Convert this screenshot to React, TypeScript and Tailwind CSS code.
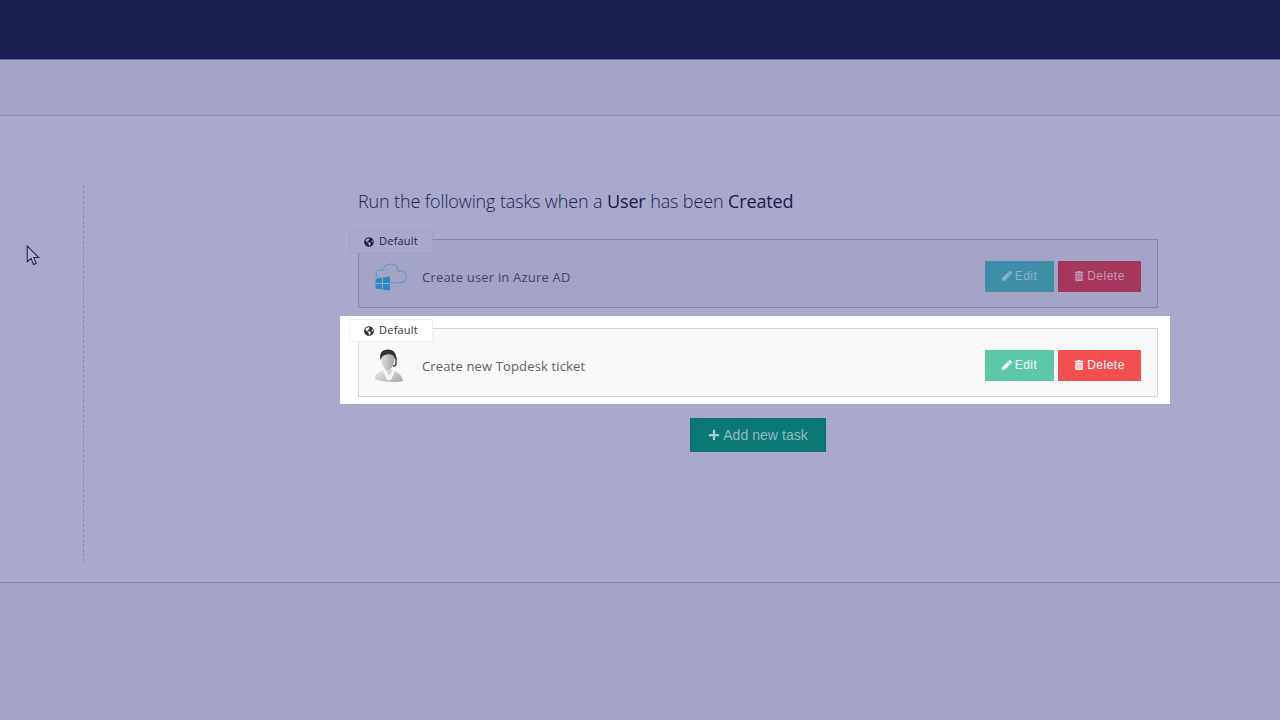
import { FaGlobeAmericas, FaPen, FaTrashAlt, FaPlus } from "react-icons/fa";

function AzureIcon() {
  return (
    <svg width="34" height="28" viewBox="0 0 34 28" fill="none">
      <path d="M6 15.5C2.5 14 1.5 11.5 2.5 9.5C3.5 7.5 6 6.5 8.5 7.5C9.5 3.5 13 1 16.5 1C21 1 24 4 24.5 8.5C27 7.2 30 8 31.5 10.5C33 13 32.5 16 30.5 18C29.5 19 28 19.7 26 19.7H15" stroke="#5a9bcb" strokeWidth="1.1" />
      <path d="M1.5 17.2L8 16.2V21.6H1.5Z M9 16L16 15V21.6H9Z M1.5 22.6H8V28L1.5 27Z M9 22.6H16V29L9 28.2Z" fill="#2a8cc4" transform="translate(0 -1.5)" />
    </svg>
  );
}

function AgentIcon() {
  return (
    <svg width="30" height="34" viewBox="0 0 30 34">
      <defs>
        <linearGradient id="bodyGrad" x1="0" y1="0" x2="1" y2="1">
          <stop offset="0" stopColor="#ececec" />
          <stop offset="1" stopColor="#a9a9a9" />
        </linearGradient>
        <linearGradient id="faceGrad" x1="0" y1="0" x2="1" y2="0">
          <stop offset="0" stopColor="#e0e0e0" />
          <stop offset="1" stopColor="#a0a0a0" />
        </linearGradient>
      </defs>
      <path d="M1 30C1 26 3 23.5 8 22L11 20.5H18L21 22C25 23.5 28 27 29 32C24 33.5 8 33.5 1 30Z" fill="url(#bodyGrad)" />
      <path d="M11 20L15 27L19 20.5L21 22L17 31H13L9 22Z" fill="#f6f6f6" />
      <path d="M7 7C7 3 10 1.5 14 1.5C18 1.5 20.5 4 20.5 8C20.5 14 18 21 14 21.5C10 21 7 15 7 7Z" fill="url(#faceGrad)" />
      <path d="M6.5 11C5 5 7.5 .5 14 .5C20 .5 23 5 22 11L20.5 9C19.5 5.5 16.5 5 13 5.5C10 6 8 7 7.5 9Z" fill="#333" />
      <path d="M22 8V14.5C22 16 21 17 19 17" stroke="#333" strokeWidth="1.3" fill="none" />
    </svg>
  );
}

function TaskCard({ dim, icon, label }: { dim: boolean; icon: React.ReactNode; label: string }) {
  return (
    <div
      className={
        dim
          ? "relative flex h-[69px] items-center border border-[#8585ae] bg-[#a4a4c7] pl-[15px] pr-4 pt-[6px]"
          : "relative flex h-[69px] items-center border border-[#d4d4d4] bg-[#f9f9f9] pl-[15px] pr-4 pt-[6px]"
      }
    >
      <span
        className={
          dim
            ? "absolute -left-[10px] -top-[10px] flex h-[23px] w-[84px] items-center justify-center gap-[5px] border border-[#a0a0c5] bg-[#a9a9cc] text-[11px] tracking-[0.2px] text-[#23233f]"
            : "absolute -left-[10px] -top-[10px] flex h-[23px] w-[84px] items-center justify-center gap-[5px] border border-[#efefef] bg-white text-[11px] tracking-[0.2px] text-[#333333]"
        }
      >
        <FaGlobeAmericas className="h-[10px] w-[10px]" />
        Default
      </span>
      <span className="flex w-[48px] justify-start">{icon}</span>
      <span className={dim ? "flex-1 pt-[2px] text-[13px] tracking-[0.2px] text-[#44446a]" : "flex-1 pt-[2px] text-[13px] tracking-[0.15px] text-[#606060]"}>{label}</span>
      <div className="flex gap-1 font-['Liberation_Sans',sans-serif] text-[12px] tracking-[0.5px]">
        <button className={dim ? "flex h-[31px] w-[69px] items-center justify-center gap-[3px] bg-[#3f8ea8] pb-[2px] text-[#8fb0c9]" : "flex h-[31px] w-[69px] items-center justify-center gap-[3px] bg-[#5cc8a8] pb-[2px] text-white"}>
          <FaPen className="h-[10px] w-[10px]" />
          Edit
        </button>
        <button className={dim ? "flex h-[31px] w-[83px] items-center justify-center gap-[3px] bg-[#a5375c] pb-[2px] text-[#c897b4]" : "flex h-[31px] w-[83px] items-center justify-center gap-[3px] bg-[#f25050] pb-[2px] text-white"}>
          <FaTrashAlt className="h-[10px] w-[10px]" />
          Delete
        </button>
      </div>
    </div>
  );
}

export default function App() {
  return (
    <div className="h-[720px] w-[1280px] overflow-hidden bg-[#a5a5c7] font-['Open_Sans',sans-serif]">
      <header className="h-[60px] border-b border-[#6d6d99] bg-[#1d2052]" />
      <div className="h-[56px] border-b border-[#8b8bb0]" />
      <main className="relative flex h-[467px] border-b border-[#8686ab] bg-[#a9a9cc] pt-[70px]">
        <svg className="absolute left-[26px] top-[129px]" width="14" height="22" viewBox="0 0 13 21" fill="none">
          <path d="M1 1V16L4.6 12.8L7 18.6L9.6 17.5L7.2 12H12L1 1Z" stroke="#24244a" strokeWidth="1" fill="#b4b4d4" />
        </svg>
        <div className="ml-[83px] h-[376px] w-0 border-l border-dashed border-[#8c8cb2]" />
        <section className="ml-[274px] w-[800px]">
          <h1 className="h-[53px] pt-[2px] text-[18px] font-light leading-[27px] tracking-[-0.13px] text-[#23234d]">
            Run the following tasks when a <span className="font-normal text-[#1a1a48]">User</span> has been <span className="font-normal text-[#1a1a48]">Created</span>
          </h1>
          <TaskCard dim icon={<AzureIcon />} label="Create user in Azure AD" />
          <div className="-ml-[18px] -mr-3 mt-2 bg-white pb-[7px] pl-[18px] pr-3 pt-3">
            <TaskCard dim={false} icon={<AgentIcon />} label="Create new Topdesk ticket" />
          </div>
          <button className="mx-auto mt-[14px] flex h-[34px] w-[136px] items-center justify-center gap-[3px] border border-[#0f6e6c] bg-[#0c7873] font-['Liberation_Sans',sans-serif] text-[14px] tracking-[0.05px] text-[#8dbcc0]">
            <FaPlus className="h-[12px] w-[12px] text-[#a9cdd0]" />
            Add new task
          </button>
        </section>
      </main>
    </div>
  );
}
